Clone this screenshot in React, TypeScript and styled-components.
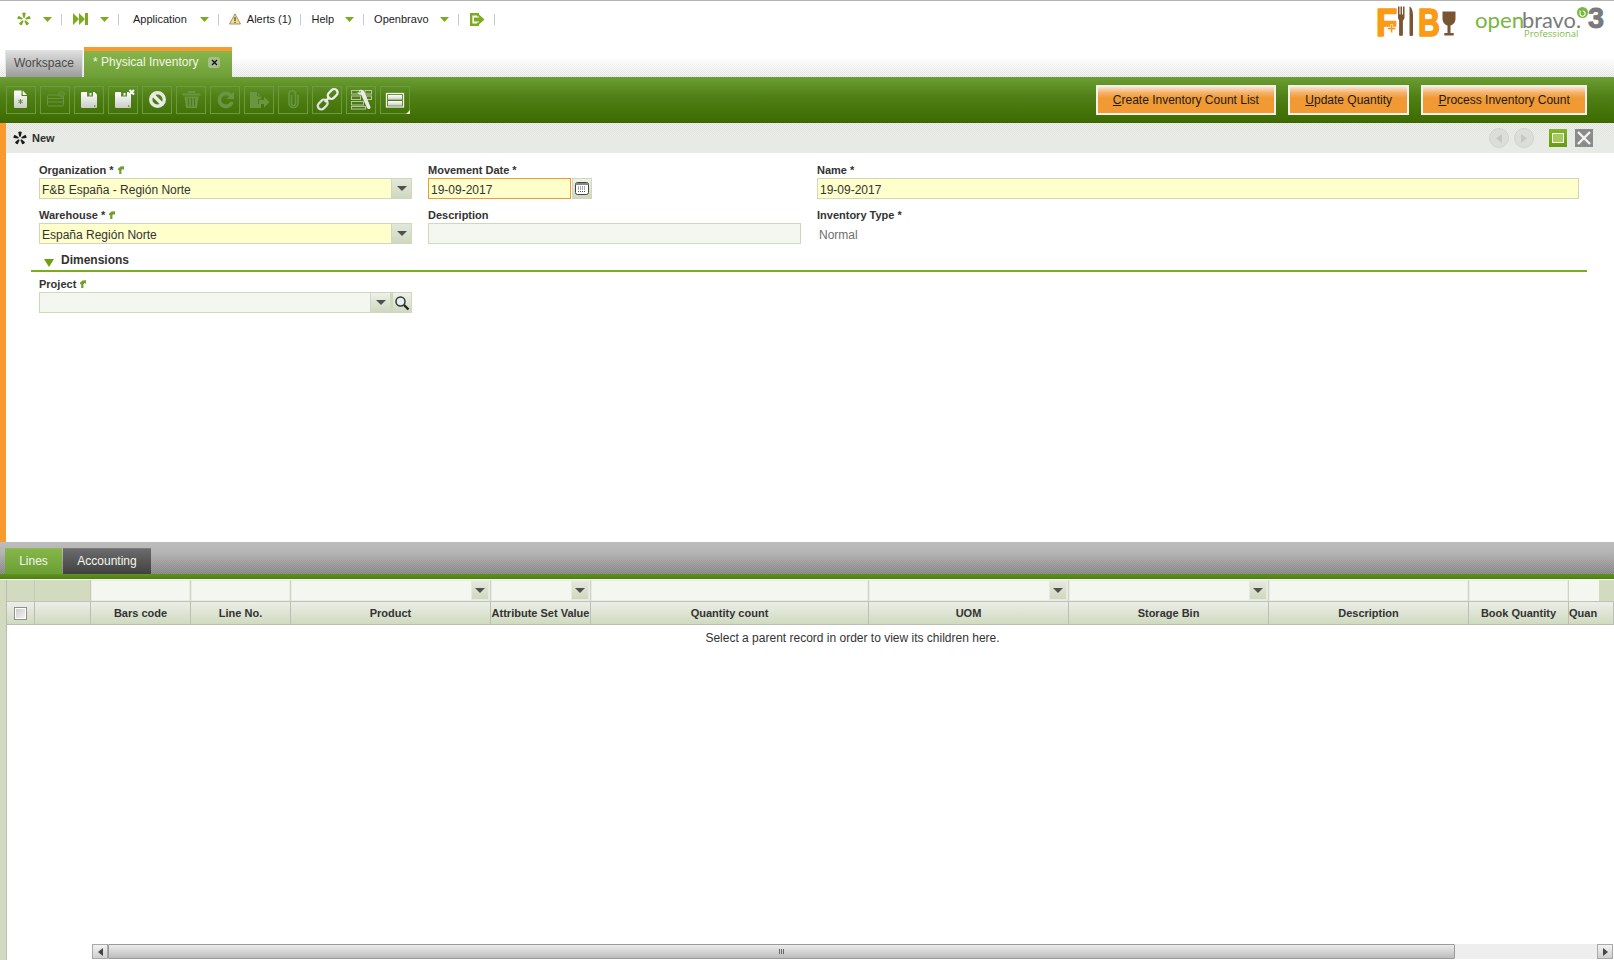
import React from 'react';
import styled, { createGlobalStyle } from 'styled-components';

const Global = createGlobalStyle`
  html, body { margin: 0; padding: 0; height: 100%; background: #fff; overflow: hidden; }
  #root { height: 100%; }
  * { box-sizing: border-box; }
  body { font-family: "Liberation Sans", Arial, sans-serif; font-size: 12px; color: #222; }
`;

const Page = styled.div`
  height: 960px; width: 100%; display: flex; flex-direction: column; overflow: hidden;
  border-top: 1px solid #b4b4b4;
`;

/* ---------- top navigation ---------- */
const NavBar = styled.div`
  height: 46px; flex: none; display: flex; align-items: flex-start; padding: 11px 0 0 17px; position: relative;
`;
const NavSlot = styled.div<{ $ml?: number }>`
  height: 14px; display: flex; align-items: center; margin-left: ${p => p.$ml ?? 0}px;
  font-size: 11px; line-height: 14px; color: #1c1c1c; white-space: nowrap;
`;
const NavSep = styled.span<{ $ml: number }>`
  width: 1px; height: 11px; background: #c9c9c9; margin: 2px 0 0 ${p => p.$ml}px; flex: none;
`;
const LogoWrap = styled.div`
  position: absolute; right: 0; top: 0; width: 240px; height: 46px;
`;

/* ---------- document tabs ---------- */
const TabStrip = styled.div`
  height: 30px; flex: none; display: flex; align-items: flex-end; padding-left: 5px; gap: 1px;
  background:
    linear-gradient(to bottom, #fff 0, #fff 35%, rgba(255,255,255,0) 100%),
    repeating-conic-gradient(#dedede 0 25%, #f5f5f5 0 50%) 0 0 / 2px 2px;
`;
const DocTab = styled.div<{ $active?: boolean }>`
  height: ${p => (p.$active ? 30 : 27)}px; display: flex; align-items: center; font-size: 12px;
  ${p => p.$active ? `
    width: 148px; padding: 0 0 4px 9px; color: #f2f5e6; border-top: 4px solid #fb9a2c;
    background: linear-gradient(to bottom, #87b54c, #6f9f38);
  ` : `
    width: 78px; padding: 0 0 2px 8px; color: #4a4a4a; border: 1px solid #e4e4e4; border-bottom: none;
    background: linear-gradient(to bottom, #dedede, #9c9c9c);
  `}
`;
const TabClose = styled.span`
  width: 12px; height: 11px; margin-left: 10px; border-radius: 3px; background: #a7c08a;
  display: flex; align-items: center; justify-content: center;
`;

/* ---------- toolbar ---------- */
const Toolbar = styled.div`
  height: 46px; flex: none; display: flex; align-items: center; padding: 0 27px 0 6px;
  background: linear-gradient(to bottom, #6b9e33 0, #4f7f14 45%, #3c6a00 100%);
`;
const ToolGroup = styled.div`
  display: flex; gap: 4px; margin-top: -1px;
`;
const ToolButton = styled.div`
  width: 30px; height: 28px; border: 1px solid #6c9a3e; display: block; line-height: 0;
`;
const ToolSvg = styled.svg`
  position: relative; display: block; margin: -1px; width: 30px; height: 28px;
`;
const ActionGroup = styled.div`
  display: flex; gap: 12px; margin-left: auto; margin-top: -1px;
`;
const ActionButton = styled.div`
  height: 30px; padding: 0 15.2px; border: 2px solid #f0f0ec; font-size: 12px; line-height: 26px; color: #1c1c1c;
  background: linear-gradient(to bottom, #f9e3cc 0, #f4b26c 22%, #f19a33 42%, #f19a33 100%);
  u { text-decoration: underline; }
`;

/* ---------- main form ---------- */
const Main = styled.div`
  height: 419px; flex: none; display: flex;
`;
const OrangeStrip = styled.div`
  width: 6px; flex: none; background: #fb9a2c;
`;
const FormColumn = styled.div`
  flex: 1; min-width: 0; display: flex; flex-direction: column;
`;
const StatusBar = styled.div`
  height: 30px; flex: none; display: flex; align-items: center; padding: 0 21px 0 7px;
  font-size: 11px; font-weight: bold; color: #2e2e2e;
  background:
    linear-gradient(to bottom, rgba(232,235,229,0) 0, #e8ebe5 60%),
    repeating-conic-gradient(#dcded8 0 25%, #f1f2ef 0 50%) 0 0 / 2px 2px;
`;
const StatusTitle = styled.span`
  margin-left: 5px;
`;
const NavCircles = styled.div`
  margin-left: auto; display: flex; gap: 5px;
`;
const NavCircle = styled.span`
  width: 20px; height: 20px; border-radius: 50%; background: #dcdfd9; border: 1px solid #d2d5ce;
  display: flex; align-items: center; justify-content: center;
`;
const MaxButton = styled.span`
  width: 18px; height: 18px; margin-left: 15px; background: linear-gradient(to bottom, #82b52a, #699a14);
  display: flex; align-items: center; justify-content: center;
`;
const MaxInner = styled.span`
  width: 12px; height: 10px; border: 1px solid #f4f7ea; background: #a5c95f;
`;
const CloseButton = styled.span`
  width: 18px; height: 18px; margin-left: 8px; background: #8b8b8b;
  display: flex; align-items: center; justify-content: center;
`;
const Form = styled.div`
  padding: 10px 26px 0 33px; flex: 1;
`;
const FieldGrid = styled.div`
  display: grid; grid-template-columns: 373px 373px 762px; column-gap: 16px; row-gap: 9px;
`;
const Field = styled.div`
  display: flex; flex-direction: column;
`;
const Label = styled.div`
  height: 15px; font-size: 11px; line-height: 14px; font-weight: bold; color: #333; display: flex; align-items: flex-start;
`;
const LabelArrow = styled.svg`
  width: 6px; height: 8px; margin: 3px 0 0 4px;
`;
const InputRow = styled.div`
  height: 21px; display: flex;
`;
const DateInputRow = styled(InputRow)`
  width: 164px;
`;
const Input = styled.div<{ $kind?: 'req' | 'focus' | 'plain' }>`
  flex: 1; min-width: 0; height: 21px; font-size: 12px; line-height: 22px; padding-left: 2px; color: #333;
  border: 1px solid ${p => (p.$kind === 'focus' ? '#f19a33' : '#cdd8bd')};
  background: ${p => (p.$kind === 'plain' ? '#f4f7ef' : '#ffffcc')};
`;
const ReadOnly = styled.div`
  height: 21px; font-size: 12px; line-height: 25px; padding-left: 2px; color: #6e6e6e;
`;
const PickerButton = styled.div<{ $ml?: number; $w?: number }>`
  width: ${p => p.$w ?? 20}px; height: 21px; flex: none; margin-left: ${p => p.$ml ?? 0}px; border: 1px solid #cdd8bd; 
  background: linear-gradient(to bottom, #eef1e8, #cfd8bf);
  display: flex; align-items: center; justify-content: center; position: relative;
`;
const SelectButton = styled.div`
  width: 21px; height: 21px; flex: none; margin-left: -21px; position: relative; border: 1px solid #cdd8bd;
  background: linear-gradient(to bottom, #e3e8da, #cfd8bf);
  display: flex; align-items: center; justify-content: center;
`;
const Caret = styled.span`
  width: 0; height: 0; border-left: 5px solid transparent; border-right: 5px solid transparent; border-top: 5px solid #505050;
`;
const Section = styled.div`
  margin: 9px 0 5px -8px; height: 19px; border-bottom: 2px solid #7bab1e; display: flex; align-items: flex-start;
  font-size: 12px; font-weight: bold; color: #333; padding-left: 13px; line-height: 15px;
  width: 1556px;
`;
const SectionArrow = styled.span`
  width: 0; height: 0; margin: 6px 7px 0 0; border-left: 5.5px solid transparent; border-right: 5.5px solid transparent; border-top: 8px solid #6f9f12;
`;
const ProjectField = styled(Field)`
  width: 373px;
`;

/* ---------- lower panel ---------- */
const Lower = styled.div`
  flex: 1; min-height: 0; display: flex; flex-direction: column;
`;
const LowerTabBar = styled.div`
  height: 32px; flex: none; display: flex; align-items: flex-end; padding-left: 5px; gap: 1px;
  background:
    linear-gradient(to bottom, #bcbcbc 0, #b6b6b6 30%, rgba(150,150,150,0) 100%),
    repeating-conic-gradient(#808080 0 25%, #949494 0 50%) 0 0 / 2px 2px;
`;
const LowerTab = styled.div<{ $active?: boolean }>`
  height: 26px; font-size: 12px; line-height: 25px; text-align: center; color: #f4f6ee;
  width: ${p => (p.$active ? 57 : 88)}px;
  background: ${p => (p.$active ? 'linear-gradient(to bottom, #86b64a, #6b9e33)' : 'linear-gradient(to bottom, #6b6b6b, #414141)')};
  border-top: 1px solid ${p => (p.$active ? '#8dbb55' : '#7a7a7a')};
`;
const GreenBar = styled.div`
  height: 5px; flex: none; background: linear-gradient(to bottom, #5f931e, #4d7f0e);
`;
const GridArea = styled.div`
  flex: 1; min-height: 0; display: flex; margin-top: 1px;
`;
const GridStrip = styled.div`
  width: 7px; flex: none; background: #d2dbc0; border-right: 1px solid #b9bdb2;
`;
const GridMain = styled.div`
  flex: 1; min-width: 0; display: flex; flex-direction: column;
`;
const cols = '28px 56px 100px 100px 200px 100px 278px 200px 200px 200px 100px 45px';
const FilterRow = styled.div`
  height: 21px; flex: none; display: grid; grid-template-columns: ${cols}; background: #c8cdbe;
`;
const FilterBlank = styled.div`
  background: #d2dbc0; border-right: 1px solid #c4c9b9;
`;
const FilterCell = styled.div`
  display: flex; padding: 1px 1px 1px 1px; border-right: 1px solid #d0d4c7;
  background: #e9ece2;
`;
const FilterInput = styled.div`
  flex: 1; background: #f4f7ef;
`;
const FilterLast = styled.div`
  background: #d2dbc0;
`;
const FilterLastInput = styled.div`
  width: 30px; height: 100%; background: #f4f7ef;
`;
const FilterButton = styled.div`
  width: 18px; flex: none; background: linear-gradient(to bottom, #e3e8da, #cfd8bf); border: 1px solid #e6eadf;
  display: flex; align-items: center; justify-content: center;
`;
const HeaderRow = styled.div`
  height: 24px; flex: none; display: grid; grid-template-columns: ${cols};
  border-top: 1px solid #bfc3b8;
`;
const HeaderCell = styled.div<{ $left?: boolean }>`
  font-size: 11px; font-weight: bold; color: #333; line-height: 21px; height: 23px; overflow: hidden; white-space: nowrap;
  text-align: ${p => (p.$left ? 'left' : 'center')};
  border-right: 1px solid #bcc0b4; border-bottom: 1px solid #bcc0b4;
  background: linear-gradient(to bottom, #ebeee8, #d0dabf);
  display: flex; align-items: center; justify-content: ${p => (p.$left ? 'flex-start' : 'center')};
`;
const CheckBox = styled.span`
  width: 13px; height: 13px; border: 1px solid #8f8f8f; background: linear-gradient(135deg, #c9c9c9, #f7f7f7);
  box-shadow: inset 0 0 0 1px #fff;
`;
const GridBody = styled.div`
  flex: 1; min-height: 0; display: flex; flex-direction: column; background: #fff; 
`;
const Message = styled.div`
  height: 28px; font-size: 12px; line-height: 27px; text-align: center; color: #333; padding-left: 84px;
`;
const HScroll = styled.div`
  margin: auto 1px 1px 85px; height: 15px; display: flex; background: #eee; flex: none;
`;
const ScrollBtn = styled.div`
  width: 16px; height: 15px; flex: none; border: 1px solid #a9a9a9; background: linear-gradient(to bottom, #f2f2f2, #cfcfcf);
  display: flex; align-items: center; justify-content: center;
`;
const ScrollThumb = styled.div`
  width: 1347px; height: 15px; flex: none; border: 1px solid #9a9a9a; border-radius: 1px;
  background: linear-gradient(to bottom, #ececec, #bcbcbc);
  display: flex; align-items: center; justify-content: center; gap: 1px;
`;
const Grip = styled.span`
  width: 1px; height: 5px; background: #666;
`;
const ScrollTrack = styled.div`
  flex: 1;
`;

/* ---------- drawings ---------- */
const Star = ({ c, size = 14 }: { c: string; size?: number }) => (
  <svg width={size} height={size} viewBox="0 0 14 14">
    {[0, 72, 144, 216, 288].map(a => (
      <path key={a} d="M6.300 5.700L5.200 1.100Q7 .1 8.800 1.100L7.700 5.700z" fill={c} transform={`rotate(${a} 7 7.300)`} />
    ))}
  </svg>
);
const GreenCaret = () => (
  <svg width="9" height="5" viewBox="0 0 9 5"><path d="M0 0h9L4.500 5z" fill="#7bab1e" /></svg>
);
const FastForward = () => (
  <svg width="15" height="14" viewBox="0 0 15 14"><path d="M0 1l6 6-6 6zM6 1l6 6-6 6z" fill="#7bab1e" /><rect x="12" y="1" width="3" height="12" fill="#7bab1e" /></svg>
);
const Warning = () => (
  <svg width="12" height="12" viewBox="0 0 12 12">
    <path d="M6 .8L11.500 11H.5z" fill="#f6dc7a" stroke="#8d8d80" strokeWidth=".9" />
    <rect x="5.400" y="4" width="1.200" height="4" fill="#444" /><rect x="5.400" y="8.800" width="1.200" height="1.200" fill="#444" />
  </svg>
);
const Logout = () => (
  <svg width="15" height="13" viewBox="0 0 15 13">
    <path d="M0 0h9v3.500H7V2.400H2.400v8.200H7V9.500h2V13H0z" fill="#7bab1e" />
    <path d="M4 4.600h5V1.600l5.500 4.900L9 11.400V8.400H4z" fill="#7bab1e" />
  </svg>
);
const GreenArrow = () => (
  <LabelArrow viewBox="0 0 6 8"><path d="M1.200 8V3.800L0 4.600V2.800L2.500 .6 6 .3v3.800L4.800 3 3.400 4.200V8z" fill="#6f9f2a" /></LabelArrow>
);
const Logo = () => (
  <svg width="240" height="46" viewBox="0 0 240 46">
    <g fontFamily="'Liberation Sans', sans-serif" fontWeight="bold" fontSize="38" fill="#fb9a14" stroke="#fb9a14" strokeWidth="1.600" strokeLinejoin="round">
      <g transform="translate(2 34.500) scale(.92 1)"><text>F</text></g>
      <g transform="translate(44 34.500) scale(.8 1)"><text>B</text></g>
    </g>
    <path d="M13.500 26.500h3v-3h2.200v3h3v2.200h-3v3h-2.200v-3h-3z" fill="#fb9a14" stroke="#fff" strokeWidth=".6" />
    <path d="M24 5.500h1.500v8h1v-8H28v8h1v-8h1.500v11c0 1.800-1.400 2.600-1.600 3.600V34c0 1.200-3.800 1.200-3.800 0V20.100C25.400 19.100 24 18.300 24 16.500z" fill="#7a5532" />
    <path d="M35.500 5.500c2.500 1 3.500 5 3.500 10v18.500c0 1.300-3.500 1.300-3.500 0z" fill="#7a5532" />
    <path d="M68.500 10.500h13v7c0 4-2.600 6.400-5 7V32h3.200v2.500h-9.400V32h3.200v-7.500c-2.400-.6-5-3-5-7z" fill="#7a5532" />
    <g transform="translate(101 27) scale(1.06 1)">
      <text fontFamily="Lato, sans-serif" fontSize="21" fill="#77b640">open</text>
    </g>
    <g transform="translate(148 27) scale(1.04 1)">
      <text fontFamily="Lato, sans-serif" fontSize="21" fill="#7a7a7a">bravo.</text>
    </g>
    <text x="150" y="36" fontFamily="'Open Sans', sans-serif" fontSize="9.500" fill="#7fbb4a">Professional</text>
    <circle cx="208.500" cy="11.500" r="5.500" fill="#77b640" />
    <path d="M206 9.500v3a2.600 2.600 0 1 0 2.600-2.500" fill="none" stroke="#fff" strokeWidth="1.100" />
    <g transform="translate(214 27) scale(1 1)">
      <text fontFamily="'Liberation Sans', sans-serif" fontWeight="bold" fontSize="29" fill="#77797a" stroke="#77797a" strokeWidth=".8">3</text>
    </g>
  </svg>
);

const dim = '#689641';
const Ico = ({ children }: { children: React.ReactNode }) => (
  <ToolSvg viewBox="0 0 30 28">{children}</ToolSvg>
);
const Floppy = () => (
  <>
    <path d="M8 6h12.500L23 8.500V21a1 1 0 0 1-1 1H8a1 1 0 0 1-1-1V7a1 1 0 0 1 1-1z" fill="url(#ig)" />
    <rect x="13" y="6" width="6" height="4.500" fill="#5d8c2e" />
    <rect x="15.500" y="7" width="2" height="2.500" fill="#eee" />
    <rect x="20" y="19.500" width="1.500" height="1.200" fill="#4d7a1e" />
  </>
);
const toolIcons = [
  <Ico key="new">
    <defs>
      <linearGradient id="ig" x1="0" y1="0" x2="0" y2="1"><stop offset="0" stopColor="#fff" /><stop offset="1" stopColor="#c9cdc4" /></linearGradient>
    </defs>
    <path d="M9 4.500h6.500V10H21v11a1 1 0 0 1-1 1H9a1 1 0 0 1-1-1V5.500a1 1 0 0 1 1-1z" fill="url(#ig)" />
    <path d="M16.700 4.500L21 9h-4.300z" fill="#fff" />
    <path d="M14.500 13v5M12.300 14.300l4.400 2.500M16.700 14.300l-4.400 2.500" stroke="#5f8f2b" strokeWidth="1" />
  </Ico>,
  <Ico key="card">
    <rect x="7.500" y="9" width="16" height="11" rx="1.500" fill="none" stroke={dim} strokeWidth="1" />
    <path d="M7.500 12.500h16M7.500 16h16" stroke={dim} strokeWidth="1" />
    <circle cx="21.500" cy="8" r="3" fill="#5d8c2e" stroke={dim} strokeDasharray="1.500 .7" />
  </Ico>,
  <Ico key="save"><Floppy /></Ico>,
  <Ico key="saveclose">
    <Floppy />
    <path d="M21.500 4l4.500 4.500M26 4l-4.500 4.500" stroke="#fff" strokeWidth="2" />
  </Ico>,
  <Ico key="ban">
    <circle cx="15.500" cy="13.500" r="6.800" fill="none" stroke="#e6e8e2" strokeWidth="3.400" />
    <path d="M10.800 8.800l9.400 9.400" stroke="#eceee9" strokeWidth="3.400" />
  </Ico>,
  <Ico key="trash">
    <path d="M6.500 7.500h18v2h-18zM12 5h7v2h-7z" fill={dim} />
    <path d="M8.500 10.500h14L21 22H10z" fill={dim} />
    <path d="M12.500 12v8.500M15.500 12v8.500M18.500 12v8.500" stroke="#4d7d1c" strokeWidth="1.200" />
  </Ico>,
  <Ico key="refresh">
    <path d="M21.500 10.500a6.500 6.500 0 1 0 .6 5.500" fill="none" stroke={dim} strokeWidth="3.600" />
    <path d="M24 5.500v7.500h-7.500z" fill={dim} />
  </Ico>,
  <Ico key="export">
    <path d="M6 6h7l4 4v3h-3v5h3v4H6z" fill={dim} />
    <path d="M15 14h5v-3.500l5.500 5.500-5.500 5.500V18h-5z" fill={dim} />
    <path d="M13.500 6v4h3.500" stroke="#4d7d1c" fill="none" />
  </Ico>,
  <Ico key="clip">
    <path d="M13.500 9v8.500a2 2 0 0 0 4 0V7.500a3.300 3.300 0 0 0-6.500 0V17a4.500 4.500 0 0 0 9 0V9" fill="none" stroke={dim} strokeWidth="1.600" />
  </Ico>,
  <Ico key="link">
    <g fill="none" strokeWidth="2.300">
      <rect x="15.200" y="4.500" width="11" height="7" rx="3.500" transform="rotate(-45 20.700 8)" stroke="#eceee9" />
      <rect x="5.200" y="15" width="11" height="7" rx="3.500" transform="rotate(-45 10.700 18.500)" stroke="#dfe2da" />
    </g>
    <path d="M12.800 15.900l4.900-4.900" stroke="#eceee9" strokeWidth="2.300" />
  </Ico>,
  <Ico key="settings">
    <g fill="none" stroke="#b5c6a2" strokeWidth="1">
      <rect x="5.500" y="4.500" width="8" height="3.500" /><rect x="19" y="4.500" width="6.500" height="3.500" />
      <rect x="5.500" y="10" width="9" height="3.500" /><rect x="20" y="10" width="5.500" height="3.500" />
      <rect x="5.500" y="15.500" width="12" height="3.500" /><rect x="5.500" y="20.500" width="14" height="2.500" />
    </g>
    <path d="M12.500 4.500c2-1.500 5.500-1 6 1.500l6 15c.6 1.700-2.500 3-3.300 1.300l-6-13.500c-1.500.3-3.800-.8-3.700-3l2 1.300 1.800-1.300z" fill="#e8eae5" />
  </Ico>,
  <Ico key="layout">
    <rect x="6.500" y="7.500" width="17" height="13.500" fill="none" stroke="#f1f3ee" strokeWidth="1.300" />
    <rect x="8" y="9" width="14" height="4.700" fill="url(#ig)" />
    <rect x="8" y="15" width="14" height="4.700" fill="url(#ig)" />
    <path d="M30 24v4h-4z" fill="#f1f3ee" />
  </Ico>,
];

const Select = ({ value, kind = 'req' }: { value: string; kind?: 'req' | 'plain' }) => (
  <InputRow>
    <Input $kind={kind}>{value}</Input>
    <SelectButton><Caret /></SelectButton>
  </InputRow>
);

type FC = { kind: 'blank' } | { kind: 'text' } | { kind: 'select' };
const filters: FC[] = [
  { kind: 'blank' }, { kind: 'blank' }, { kind: 'text' }, { kind: 'text' }, { kind: 'select' }, { kind: 'select' },
  { kind: 'text' }, { kind: 'select' }, { kind: 'select' }, { kind: 'text' }, { kind: 'text' },
];
const headers = ['', 'Bars code', 'Line No.', 'Product', 'Attribute Set Value', 'Quantity count', 'UOM', 'Storage Bin', 'Description', 'Book Quantity'];

export default function App() {
  return (
    <Page>
      <Global />
      <NavBar>
        <NavSlot><Star c="#7bab1e" /></NavSlot>
        <NavSlot $ml={12}><GreenCaret /></NavSlot>
        <NavSep $ml={9} />
        <NavSlot $ml={11}><FastForward /></NavSlot>
        <NavSlot $ml={12}><GreenCaret /></NavSlot>
        <NavSep $ml={9} />
        <NavSlot $ml={14}>Application</NavSlot>
        <NavSlot $ml={13}><GreenCaret /></NavSlot>
        <NavSep $ml={9} />
        <NavSlot $ml={10}><Warning /></NavSlot>
        <NavSlot $ml={6}>Alerts (1)</NavSlot>
        <NavSep $ml={9} />
        <NavSlot $ml={10}>Help</NavSlot>
        <NavSlot $ml={11}><GreenCaret /></NavSlot>
        <NavSep $ml={9} />
        <NavSlot $ml={10}>Openbravo</NavSlot>
        <NavSlot $ml={11}><GreenCaret /></NavSlot>
        <NavSep $ml={9} />
        <NavSlot $ml={11}><Logout /></NavSlot>
        <NavSep $ml={9} />
        <LogoWrap><Logo /></LogoWrap>
      </NavBar>

      <TabStrip>
        <DocTab>Workspace</DocTab>
        <DocTab $active>
          * Physical Inventory
          <TabClose>
            <svg width="7" height="7" viewBox="0 0 7 7"><path d="M1 1l5 5M6 1L1 6" stroke="#111" strokeWidth="1.300" /></svg>
          </TabClose>
        </DocTab>
      </TabStrip>

      <Toolbar>
        <ToolGroup>
          {toolIcons.map((ic, i) => <ToolButton key={i}>{ic}</ToolButton>)}
        </ToolGroup>
        <ActionGroup>
          <ActionButton><u>C</u>reate Inventory Count List</ActionButton>
          <ActionButton><u>U</u>pdate Quantity</ActionButton>
          <ActionButton><u>P</u>rocess Inventory Count</ActionButton>
        </ActionGroup>
      </Toolbar>

      <Main>
        <OrangeStrip />
        <FormColumn>
          <StatusBar>
            <Star c="#1a1a1a" />
            <StatusTitle>New</StatusTitle>
            <NavCircles>
              <NavCircle><svg width="6" height="9" viewBox="0 0 6 9"><path d="M6 0v9L0 4.500z" fill="#c6c9c3" /></svg></NavCircle>
              <NavCircle><svg width="6" height="9" viewBox="0 0 6 9"><path d="M0 0v9l6-4.500z" fill="#c6c9c3" /></svg></NavCircle>
            </NavCircles>
            <MaxButton><MaxInner /></MaxButton>
            <CloseButton>
              <svg width="16" height="16" viewBox="0 0 16 16"><path d="M2 2l12 12M14 2L2 14" stroke="#f3f3f3" strokeWidth="2.400" /></svg>
            </CloseButton>
          </StatusBar>
          <Form>
            <FieldGrid>
              <Field>
                <Label>Organization *<GreenArrow /></Label>
                <Select value="F&B España - Región Norte" />
              </Field>
              <Field>
                <Label>Movement Date *</Label>
                <DateInputRow>
                  <Input $kind="focus">19-09-2017</Input>
                  <PickerButton $ml={1}>
                    <svg width="14" height="13" viewBox="0 0 14 13">
                      <rect x=".5" y=".5" width="13" height="12" rx="2" fill="#fff" stroke="#444" />
                      <rect x="1" y="1" width="12" height="2" fill="#888" />
                      <path d="M3 5h8M3 7h8M3 9.500h8" stroke="#555" strokeWidth="1" strokeDasharray="1 1" />
                    </svg>
                  </PickerButton>
                </DateInputRow>
              </Field>
              <Field>
                <Label>Name *</Label>
                <InputRow><Input>19-09-2017</Input></InputRow>
              </Field>
              <Field>
                <Label>Warehouse *<GreenArrow /></Label>
                <Select value="España Región Norte" />
              </Field>
              <Field>
                <Label>Description</Label>
                <InputRow><Input $kind="plain" /></InputRow>
              </Field>
              <Field>
                <Label>Inventory Type *</Label>
                <ReadOnly>Normal</ReadOnly>
              </Field>
            </FieldGrid>
            <Section><SectionArrow />Dimensions</Section>
            <ProjectField>
              <Label>Project<GreenArrow /></Label>
              <InputRow>
                <Input $kind="plain" />
                <PickerButton $ml={-22} $w={21}><Caret /></PickerButton>
                <PickerButton $ml={1}>
                  <svg width="16" height="16" viewBox="0 0 16 16">
                    <circle cx="6.500" cy="6.500" r="4.500" fill="#e6eef2" stroke="#333" strokeWidth="1.500" />
                    <path d="M10 10l4.500 4.500" stroke="#222" strokeWidth="2.400" />
                  </svg>
                </PickerButton>
              </InputRow>
            </ProjectField>
          </Form>
        </FormColumn>
      </Main>

      <Lower>
        <LowerTabBar>
          <LowerTab $active>Lines</LowerTab>
          <LowerTab>Accounting</LowerTab>
        </LowerTabBar>
        <GreenBar />
        <GridArea>
          <GridStrip />
          <GridMain>
            <FilterRow>
              {filters.map((f, i) => f.kind === 'blank'
                ? <FilterBlank key={i} />
                : (
                  <FilterCell key={i}>
                    <FilterInput />
                    {f.kind === 'select' && <FilterButton><Caret /></FilterButton>}
                  </FilterCell>
                ))}
              <FilterLast><FilterLastInput /></FilterLast>
            </FilterRow>
            <HeaderRow>
              <HeaderCell><CheckBox /></HeaderCell>
              {headers.map((h, i) => <HeaderCell key={i}>{h}</HeaderCell>)}
              <HeaderCell $left>Quan</HeaderCell>
            </HeaderRow>
            <GridBody>
              <Message>Select a parent record in order to view its children here.</Message>
              <HScroll>
                <ScrollBtn><svg width="5" height="8" viewBox="0 0 5 8"><path d="M5 0v8L0 4z" fill="#444" /></svg></ScrollBtn>
                <ScrollThumb><Grip /><Grip /><Grip /></ScrollThumb>
                <ScrollTrack />
                <ScrollBtn><svg width="5" height="8" viewBox="0 0 5 8"><path d="M0 0v8l5-4z" fill="#444" /></svg></ScrollBtn>
              </HScroll>
            </GridBody>
          </GridMain>
        </GridArea>
      </Lower>
    </Page>
  );
}
